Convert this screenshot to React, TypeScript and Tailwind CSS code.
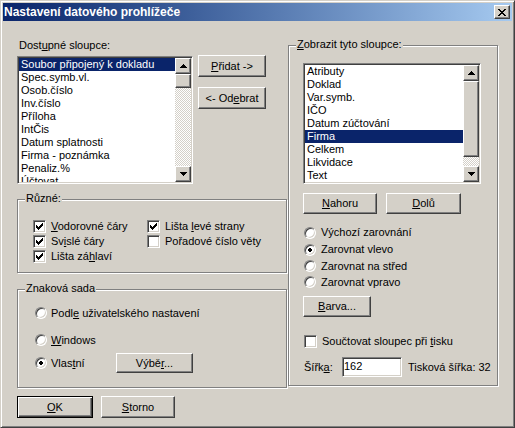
import type { ReactNode } from 'react';

const raised =
  'bg-[#d4d0c8] border border-t-white border-l-white border-r-[#404040] border-b-[#404040] shadow-[inset_-1px_-1px_0_#808080]';
const sunken =
  'border border-t-[#808080] border-l-[#808080] border-r-white border-b-white shadow-[inset_1px_1px_0_#404040,inset_-1px_-1px_0_#d4d0c8]';
const etched = 'relative border border-[#808080] shadow-[inset_1px_1px_0_#fff,1px_1px_0_#fff]';

const leftItems = [
  'Soubor připojený k dokladu',
  'Spec.symb.vl.',
  'Osob.číslo',
  'Inv.číslo',
  'Příloha',
  'IntČis',
  'Datum splatnosti',
  'Firma - poznámka',
  'Penaliz.%',
  'Účtovat',
];

const rightItems = [
  'Atributy',
  'Doklad',
  'Var.symb.',
  'IČO',
  'Datum zúčtování',
  'Firma',
  'Celkem',
  'Likvidace',
  'Text',
];

// small pixel glyphs, drawn 1:1
function Pix({ rows, color = '#000' }: { rows: string[]; color?: string }) {
  const w = rows[0].length;
  const h = rows.length;
  return (
    <svg width={w} height={h} viewBox={`0 0 ${w} ${h}`} shapeRendering="crispEdges" className="block">
      {rows.flatMap((r, y) =>
        [...r].map((c, x) =>
          c === 'X' ? <rect key={`${x}-${y}`} x={x} y={y} width={1} height={1} fill={color} /> : null
        )
      )}
    </svg>
  );
}

const closeX = ['XX....XX', '.XX..XX.', '..XXXX..', '...XX...', '..XXXX..', '.XX..XX.', 'XX....XX'];
const arrowUp = ['...X...', '..XXX..', '.XXXXX.', 'XXXXXXX'];
const arrowDown = ['XXXXXXX', '.XXXXX.', '..XXX..', '...X...'];
const checkMark = ['......X', '.....XX', 'X...XXX', 'XX.XXX.', 'XXXXX..', '.XXX...', '..X....'];
const dot = ['.XX.', 'XXXX', 'XXXX', '.XX.'];

function Btn({ className, children, def }: { className: string; children: ReactNode; def?: boolean }) {
  const frame = def
    ? 'bg-[#d4d0c8] border border-black shadow-[inset_1px_1px_0_#fff,inset_-1px_-1px_0_#404040,inset_-2px_-2px_0_#808080]'
    : raised;
  return <div className={`${frame} ${className} flex items-center justify-center`}>{children}</div>;
}

function ScrollBar({ thumb }: { thumb: string }) {
  return (
    <div className="w-[16px] flex flex-col">
      <div className={`${raised} h-[16px] flex items-center justify-center`}>
        <Pix rows={arrowUp} />
      </div>
      <div className={`${raised} ${thumb}`} />
      <div className="flex-1 bg-[image:repeating-conic-gradient(#d4d0c8_0_25%,#fff_0_50%)] bg-[length:2px_2px]" />
      <div className={`${raised} h-[16px] flex items-center justify-center`}>
        <Pix rows={arrowDown} />
      </div>
    </div>
  );
}

function ListBox({
  className,
  items,
  selected,
  thumb,
}: {
  className: string;
  items: string[];
  selected: number;
  thumb: string;
}) {
  return (
    <div className={`${sunken} ${className} bg-white p-[1px] flex`}>
      <div className="flex-1 overflow-hidden">
        {items.map((it, i) => (
          <div
            key={it}
            className={`h-[13px] leading-[13px] pl-[2px] whitespace-nowrap ${
              i === selected ? 'bg-[#0a246a] text-white' : ''
            }`}
          >
            {it}
          </div>
        ))}
      </div>
      <ScrollBar thumb={thumb} />
    </div>
  );
}

function Group({ label, className, children }: { label: ReactNode; className: string; children: ReactNode }) {
  return (
    <div className={`${etched} ${className}`}>
      <div className="absolute -top-[8px] left-[7px] px-[1px] bg-[#d4d0c8] leading-[13px] whitespace-nowrap">
        {label}
      </div>
      {children}
    </div>
  );
}

function CheckBox({ checked }: { checked?: boolean }) {
  return (
    <div className={`${sunken} w-[13px] h-[13px] bg-white flex items-center justify-center shrink-0`}>
      {checked && <Pix rows={checkMark} />}
    </div>
  );
}

function Radio({ on }: { on?: boolean }) {
  return (
    <div className="w-[12px] h-[12px] rounded-full bg-white border border-t-[#808080] border-l-[#808080] border-r-white border-b-white shadow-[inset_1px_1px_0_#404040,inset_-1px_-1px_0_#d4d0c8] flex items-center justify-center shrink-0">
      {on && <Pix rows={dot} />}
    </div>
  );
}

function CheckRow({ checked, children }: { checked?: boolean; children: ReactNode }) {
  return (
    <div className="h-[15px] flex items-center whitespace-nowrap">
      <CheckBox checked={checked} />
      <span className="ml-[5px]">{children}</span>
    </div>
  );
}

export default function App() {
  return (
    <div className="w-[515px] h-[428px] bg-[#d4d0c8] border border-t-[#d4d0c8] border-l-[#d4d0c8] border-r-[#404040] border-b-[#404040] shadow-[inset_1px_1px_0_#fff,inset_-1px_-1px_0_#808080] p-[2px] flex flex-col font-['Liberation_Sans',Arial,sans-serif] text-[11px] leading-[13px] text-black overflow-hidden">
      {/* title bar */}
      <div className="h-[18px] shrink-0 flex items-center justify-between bg-linear-to-r from-[#0a246a] to-[#a6caf0] pl-[1px] pr-[2px]">
        <span className="text-white font-bold text-[12px] leading-[18px] whitespace-nowrap">
          Nastavení datového prohlížeče
        </span>
        <div className={`${raised} w-[16px] h-[14px] flex items-center justify-center`}>
          <Pix rows={closeX} />
        </div>
      </div>

      <div className="flex px-[14px]">
        {/* left column */}
        <div className="w-[271px] pt-[18px] flex flex-col">
          <div className="flex">
            <div className="flex flex-col w-[176px]">
              <div className="h-[13px] mb-[4px] pl-[2px]">
                Dost<u>u</u>pné sloupce:
              </div>
              <ListBox className="w-[176px] h-[128px]" items={leftItems} selected={0} thumb="h-[14px]" />
            </div>
            <div className="flex flex-col ml-[5px] pt-[16px] gap-[10px]">
              <Btn className="w-[68px] h-[22px]">
                <span>
                  <u>P</u>řidat -&gt;
                </span>
              </Btn>
              <Btn className="w-[68px] h-[22px]">
                <span>
                  &lt;- Od<u>e</u>brat
                </span>
              </Btn>
            </div>
          </div>

          <Group label="Různé:" className="mt-[15px] w-[270px] h-[74px] pt-[19px] pl-[15px] flex">
            <div className="w-[114px] flex flex-col">
              <CheckRow checked>
                <u>V</u>odorovné čáry
              </CheckRow>
              <CheckRow checked>
                Sv<u>i</u>slé čáry
              </CheckRow>
              <CheckRow checked>
                Lišta zá<u>h</u>laví
              </CheckRow>
            </div>
            <div className="flex flex-col">
              <CheckRow checked>
                Lišta <u>l</u>evé strany
              </CheckRow>
              <CheckRow>Pořadové číslo věty</CheckRow>
            </div>
          </Group>

          <Group label="Znaková sada" className="mt-[16px] w-[270px] h-[99px] pt-[15px] pl-[17px] flex flex-col">
            <div className="h-[16px] flex items-center whitespace-nowrap">
              <Radio />
              <span className="ml-[4px]">
                Podl<u>e</u> uživatelského nastavení
              </span>
            </div>
            <div className="h-[16px] mt-[11px] flex items-center">
              <Radio />
              <span className="ml-[4px]">
                <u>W</u>indows
              </span>
            </div>
            <div className="h-[20px] mt-[5px] flex items-center">
              <Radio on />
              <span className="ml-[4px] w-[65px]">
                Vlas<u>t</u>ní
              </span>
              <Btn className="w-[77px] h-[20px]">
                <span>
                  Výbě<u>r</u>...
                </span>
              </Btn>
            </div>
          </Group>

          <div className="flex gap-[8px] mt-[8px]">
            <Btn def className="w-[76px] h-[22px]">
              <u>O</u>K
            </Btn>
            <Btn className="w-[74px] h-[22px]">
              <span>
                <u>S</u>torno
              </span>
            </Btn>
          </div>
        </div>

        {/* right group */}
        <Group
          label={
            <>
              <u>Z</u>obrazit tyto sloupce:
            </>
          }
          className="mt-[24px] w-[210px] h-[341px] pt-[17px] pl-[14px] flex flex-col"
        >
          <ListBox className="w-[178px] h-[121px]" items={rightItems} selected={5} thumb="h-[76px]" />

          <div className="flex gap-[9px] mt-[9px]">
            <Btn className="w-[74px] h-[21px]">
              <span>
                <u>N</u>ahoru
              </span>
            </Btn>
            <Btn className="w-[75px] h-[21px]">
              <span>
                <u>D</u>olů
              </span>
            </Btn>
          </div>

          <div className="flex flex-col mt-[10px] whitespace-nowrap">
            <div className="h-[17px] flex items-center">
              <span className="ml-[1px]">
                <Radio />
              </span>
              <span className="ml-[5px]">Výchozí zarovnání</span>
            </div>
            <div className="h-[17px] flex items-center">
              <span className="ml-[1px]">
                <Radio on />
              </span>
              <span className="ml-[5px]">Zarovnat vlevo</span>
            </div>
            <div className="h-[16px] flex items-center">
              <span className="ml-[1px]">
                <Radio />
              </span>
              <span className="ml-[5px]">Zarovnat na střed</span>
            </div>
            <div className="h-[16px] flex items-center">
              <span className="ml-[1px]">
                <Radio />
              </span>
              <span className="ml-[5px]">Zarovnat vpravo</span>
            </div>
          </div>

          <Btn className="w-[68px] h-[21px] mt-[6px]">
            <span>
              <u>B</u>arva...
            </span>
          </Btn>

          <div className="h-[13px] mt-[18px] flex items-center whitespace-nowrap">
            <span className="ml-[1px]">
              <CheckBox />
            </span>
            <span className="ml-[5px]">
              Součtovat sloupec při <u>t</u>isku
            </span>
          </div>

          <div className="h-[20px] mt-[9px] flex items-center whitespace-nowrap">
            <span className="ml-[1px] w-[38px]">
              Šířk<u>a</u>:
            </span>
            <div className={`${sunken} w-[60px] h-[20px] bg-white pl-[1px] pt-[2px]`}>162</div>
            <span className="ml-[6px]">Tisková šířka: 32</span>
          </div>
        </Group>
      </div>
    </div>
  );
}
